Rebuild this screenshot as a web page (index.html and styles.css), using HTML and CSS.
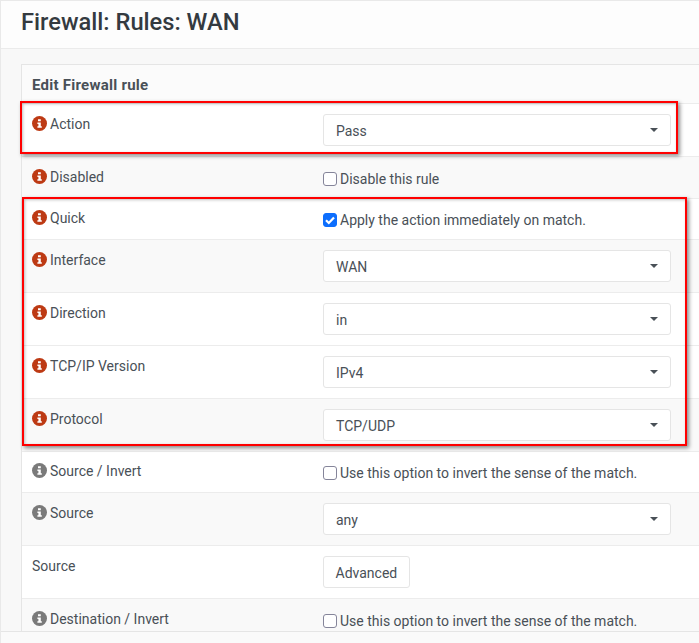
FILE: index.html
```html
<!DOCTYPE html>
<html lang="en">
<head>
<meta charset="utf-8">
<title>Firewall: Rules: WAN</title>
<link rel="stylesheet" href="styles.css">
</head>
<body>
<svg class="defs" width="0" height="0" aria-hidden="true">
  <symbol id="info" viewBox="0 0 15 15">
    <circle cx="7.5" cy="7.5" r="7.5" fill="currentColor"/>
    <path d="M6 3.2h2.8v2H6zM5.4 6.4h3.4v3.8h1v1.6H5.4v-1.6h1V8h-1z" fill="#fff"/>
  </symbol>
  <symbol id="caret" viewBox="0 0 8 4">
    <path d="M0 0h8L4 4z" fill="currentColor"/>
  </symbol>
  <symbol id="tick" viewBox="0 0 14 14">
    <path d="M3 7.2l2.8 2.8L11 4.4" fill="none" stroke="#fff" stroke-width="2.2"/>
  </symbol>
</svg>
<div class="page">
  <header class="title"><h1>Firewall: Rules: WAN</h1></header>
  <main class="content">
    <section class="panel">
      <h2 class="panel-head">Edit Firewall rule</h2>
      <div class="row tall alt-w">
        <div class="label"><svg class="ico req"><use href="#info"/></svg>Action</div>
        <div class="select"><span>Pass</span><svg class="caret"><use href="#caret"/></svg></div>
      </div>
      <div class="row short alt-g">
        <div class="label"><svg class="ico req"><use href="#info"/></svg>Disabled</div>
        <label class="check"><span class="box"></span>Disable this rule</label>
      </div>
      <div class="row shorter alt-w">
        <div class="label"><svg class="ico req"><use href="#info"/></svg>Quick</div>
        <label class="check"><span class="box on"><svg class="tick"><use href="#tick"/></svg></span>Apply the action immediately on match.</label>
      </div>
      <div class="row tall alt-g">
        <div class="label"><svg class="ico req"><use href="#info"/></svg>Interface</div>
        <div class="select"><span>WAN</span><svg class="caret"><use href="#caret"/></svg></div>
      </div>
      <div class="row tall alt-w">
        <div class="label"><svg class="ico req"><use href="#info"/></svg>Direction</div>
        <div class="select"><span>in</span><svg class="caret"><use href="#caret"/></svg></div>
      </div>
      <div class="row tall alt-w">
        <div class="label"><svg class="ico req"><use href="#info"/></svg>TCP/IP Version</div>
        <div class="select"><span>IPv4</span><svg class="caret"><use href="#caret"/></svg></div>
      </div>
      <div class="row tall alt-g">
        <div class="label"><svg class="ico req"><use href="#info"/></svg>Protocol</div>
        <div class="select"><span>TCP/UDP</span><svg class="caret"><use href="#caret"/></svg></div>
      </div>
      <div class="row shorter alt-w">
        <div class="label"><svg class="ico opt"><use href="#info"/></svg>Source / Invert</div>
        <label class="check"><span class="box"></span>Use this option to invert the sense of the match.</label>
      </div>
      <div class="row tall alt-g">
        <div class="label"><svg class="ico opt"><use href="#info"/></svg>Source</div>
        <div class="select"><span>any</span><svg class="caret"><use href="#caret"/></svg></div>
      </div>
      <div class="row tall alt-w">
        <div class="label">Source</div>
        <div><button class="btn" type="button">Advanced</button></div>
      </div>
      <div class="row short alt-g">
        <div class="label"><svg class="ico opt"><use href="#info"/></svg>Destination / Invert</div>
        <label class="check"><span class="box"></span>Use this option to invert the sense of the match.</label>
      </div>
    </section>
  </main>
  <footer class="foot"></footer>
  <div class="mark mark-one"></div>
  <div class="mark mark-two"></div>
</div>
</body>
</html>
```
FILE: styles.css
```css
* { box-sizing: border-box; }
html, body { margin: 0; height: 100%; overflow: hidden; }
body {
  font-family: Roboto, "Noto Sans", sans-serif;
  font-size: 14px;
  color: #495057;
  background: #f8f8f8;
}
.defs { position: absolute; }
.page {
  position: relative;
  height: 643px;
  border-left: 1px solid #e9e9e9;
  border-top: 1px solid #e9e9e9;
  overflow: hidden;
  display: flex;
  flex-direction: column;
}
.title {
  height: 48px;
  flex: none;
  background: #fdfdfd;
  border-bottom: 1px solid #ebebeb;
  padding-left: 20px;
  display: flex;
  align-items: center;
}
h1 {
  margin: 0 0 5px;
  font-size: 23.7px;
  font-weight: 500;
  color: #343a40;
}
.content {
  flex: 1;
  min-height: 0;
  overflow: hidden;
  padding: 15px 0 0 20px;
}
.panel {
  background: #fff;
  border: 1px solid #e5e5e5;
  border-right: 0;
}
.panel-head {
  margin: 0;
  height: 38px;
  padding: 11px 10px 0;
  font-size: 15px;
  letter-spacing: .25px;
  font-weight: 700;
  color: #495057;
  background: #fbfbfb;
}
.row {
  display: grid;
  grid-template-columns: 291px 348px;
  padding: 10px 10px 0;
  border-top: 1px solid #ececec;
}
.tall { height: 53px; }
.short { height: 42px; }
.shorter { height: 41px; padding-top: 9px; }
.alt-w { background: #fff; }
.alt-g { background: #f9f9f9; }
.label { display: flex; align-items: flex-start; line-height: 20px; }
.ico { width: 15px; height: 15px; margin: 2px 3px 0 0; flex: none; }
.req { color: #bd3a14; }
.opt { color: #7a7a7a; }
.select {
  height: 32px;
  background: #fff;
  border: 1px solid #e5e5e5;
  border-radius: 3px;
  padding: 2px 12px 0 12px;
  display: flex;
  align-items: center;
  justify-content: space-between;
}
.caret { width: 8px; height: 4px; margin-top: -2px; color: #495057; }
.check { display: flex; align-items: center; height: 20px; margin-top: 2px; }
.box {
  width: 14px;
  height: 14px;
  margin: -1px 3px 0 0;
  background: #fff;
  border: 1px solid #85859a;
  border-radius: 3px;
  flex: none;
  display: block;
}
.box.on { background: #0d6efd; border-color: #0d6efd; position: relative; }
.tick { position: absolute; left: -1px; top: -1px; width: 14px; height: 14px; }
.btn {
  height: 32px;
  padding: 2px 11.5px 0;
  font: inherit;
  color: #495057;
  background: #fff;
  border: 1px solid #e5e5e5;
  border-radius: 3px;
}
.foot {
  height: 12px;
  flex: none;
  background: #fafafa;
  border-top: 1px solid #e5e5e5;
}
.mark {
  position: absolute;
  border: 2px solid #f00;
  box-shadow: 2px 2px 4px rgba(0,0,0,.45), inset 1px 1px 3px rgba(0,0,0,.25);
}
.mark-one { left: 19px; top: 100px; width: 658px; height: 53px; }
.mark-two { left: 21px; top: 196px; width: 665px; height: 249px; }
```
